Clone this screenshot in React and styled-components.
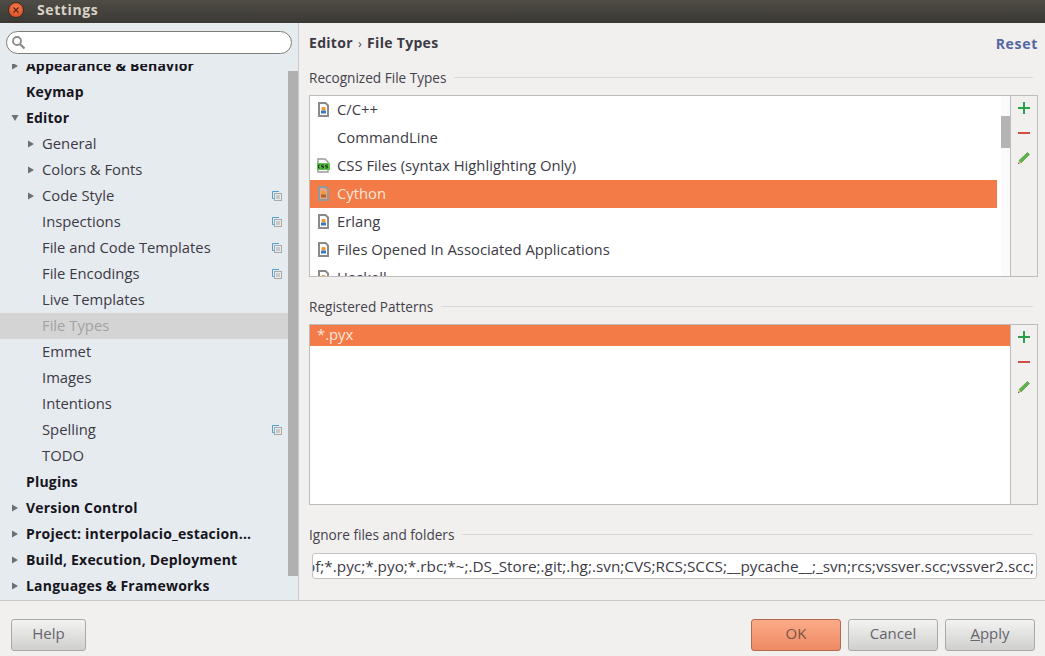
import React from "react";
import styled, { createGlobalStyle } from "styled-components";

const Global = createGlobalStyle`
  html, body { margin: 0; padding: 0; background: #f1f0ee; }
  #root { width: 1045px; height: 656px; overflow: hidden; }
  * { box-sizing: border-box; }
`;
const UI = `"Open Sans", "Noto Sans", sans-serif`;
const BOLD = `"Open Sans", "DejaVu Sans", sans-serif`;

const Window = styled.div`
  width: 1045px; height: 656px; display: flex; flex-direction: column;
  background: #f1f0ee; font-family: ${UI}; color: #3d3a45;
`;
const TitleBar = styled.div`
  height: 23px; flex: none; display: flex; align-items: center; padding-left: 8px; gap: 13px;
  background: linear-gradient(#4f4c46, #3b3934);
`;
const CloseDot = styled.div`
  width: 16px; height: 16px; margin-top: -4px; margin-bottom: -1px; border-radius: 50%;
  background: radial-gradient(circle at 50% 35%, #f47a4d, #d9471f);
  border: 1px solid #3a2a20; display: flex; align-items: center; justify-content: center;
`;
const WinTitle = styled.div`
  font: bold 14px ${BOLD}; color: #d8d3c8; letter-spacing: 0.6px; padding-bottom: 5px;
`;
const Body = styled.div`
  flex: 1; display: flex; min-height: 0; border-bottom: 1px solid #c8c8c8;
`;
const Sidebar = styled.div`
  width: 299px; flex: none; background: #e6ebf0; border-right: 1px solid #c9c9c9;
  display: flex; flex-direction: column; position: relative;
`;
const SearchWrap = styled.div`
  height: 41px; flex: none; padding: 8px 6px 0 6px;
`;
const SearchBox = styled.div`
  height: 23px; border: 1px solid #7f7d78; border-radius: 12px; background: #fff;
  display: flex; align-items: center; padding-left: 4px;
`;
const Tree = styled.div`
  flex: 1; overflow: hidden; min-height: 0;
`;
const TreeInner = styled.div`
  margin-top: -11px;
`;
const Row = styled.div`
  height: 26px; display: flex; align-items: center; position: relative;
  padding-left: ${p => (p.$child ? 42 : 26)}px;
  padding-bottom: ${p => (p.$bold ? 1 : 2)}px;
  width: 288px;
  background: ${p => (p.$sel ? "#d4d4d4" : "transparent")};
  color: ${p => (p.$sel ? "#a2a2a2" : p.$bold ? "#17151c" : "#3d3a45")};
  font: ${p => (p.$bold ? `bold 14px ${BOLD}` : `14.8px ${UI}`)};
  letter-spacing: ${p => (p.$bold ? "0.2px" : "0")};
  white-space: nowrap;
`;
const Arrow = styled.svg`
  position: absolute; left: ${p => (p.$child ? 27 : 11)}px; top: 9px;
`;
const CopyIco = styled.svg`
  position: absolute; left: 272px; top: 8px;
`;
const SideScroll = styled.div`
  position: absolute; left: 288px; top: 48px; width: 10px; height: 505px; background: #b0b0b0;
`;
const Main = styled.div`
  flex: 1; min-width: 0; padding: 0 7px 0 10px; display: flex; flex-direction: column;
`;
const Header = styled.div`
  height: 39px; flex: none; display: flex; align-items: center; justify-content: space-between;
`;
const Crumb = styled.div`
  font: bold 14px ${BOLD}; color: #3d3a45; display: flex; align-items: center; gap: 5px; letter-spacing: 0.3px;
`;
const Sep = styled.span`
  font: 13px ${UI}; color: #55525c;
`;
const Reset = styled.div`
  font: bold 14px ${BOLD}; color: #5467a3; letter-spacing: 0.7px; padding-top: 2px;
`;
const SectionTitle = styled.div`
  height: ${p => p.$h}px; margin-top: ${p => p.$mt || 0}px; flex: none; padding-bottom: 2px;
  display: flex; align-items: center; gap: 8px; font-size: 13.6px; color: #45424d; padding-right: 5px;
  &::after { content: ""; flex: 1; height: 1px; background: #d9d9d7; }
`;
const ListBox = styled.div`
  height: ${p => p.$h}px; flex: none; display: flex; border: 1px solid #bdbdbd; background: #fff;
`;
const ListArea = styled.div`
  flex: 1; min-width: 0; overflow: hidden; position: relative;
`;
const TypeRow = styled.div`
  height: 28px; width: 687px; display: flex; align-items: center; gap: 6px; padding: 0 0 2px 6px;
  font-size: 14.8px; white-space: nowrap;
  background: ${p => (p.$sel ? "#f37b48" : "transparent")};
  color: ${p => (p.$sel ? "#fde6da" : "#3d3a45")};
`;
const IconSlot = styled.div`
  width: 15px; height: 16px; flex: none; display: flex; align-items: center; justify-content: center;
`;
const VScroll = styled.div`
  position: absolute; left: 691px; top: 0; bottom: 0; width: 10px; background: #fafafa;
  &::after { content: ""; position: absolute; left: 0; right: 0; top: 20px; height: 32px; background: #b4b4b4; }
`;
const Tools = styled.div`
  width: 27px; flex: none; border-left: 1px solid #bdbdbd; background: #f1f0ee;
  display: flex; flex-direction: column; align-items: center; padding-top: 5px; gap: 11px;
`;
const PatternRow = styled.div`
  height: 21px; background: #f37b48; color: #fde6da; font-size: 14.8px;
  display: flex; align-items: center; padding: 0 0 3px 7px;
`;
const IgnoreInput = styled.div`
  height: 26px; flex: none; margin: 0 1px 0 3px; border: 1px solid #c4c4c4; border-radius: 3px;
  background: #fff; display: flex; justify-content: flex-end; align-items: center;
  overflow: hidden; padding: 0 2px 1px; font-size: 15.3px; white-space: nowrap; color: #3d3a45;
`;
const Footer = styled.div`
  height: 55px; flex: none; display: flex; align-items: flex-start; padding: 18px 10px 0 11px; gap: 7px;
`;
const Btn = styled.div`
  width: ${p => p.$w}px; height: 32px; border-radius: 3px; display: flex; align-items: center; justify-content: center;
  padding-bottom: 4px;
  font-size: 15px; color: ${p => (p.$primary ? "#7a5344" : "#66646d")};
  border: 1px solid ${p => (p.$primary ? "#b06b50" : "#a9a9a7")};
  background: ${p => (p.$primary ? "linear-gradient(#fbab88, #ee8a63)" : "linear-gradient(#f3f3f2, #cfcfce)")};
  margin-left: ${p => (p.$push ? "auto" : 0)};
  u { text-decoration: underline; }
`;

const ArrowRight = ({ child }) => (
  <Arrow $child={child} width="8" height="8" viewBox="0 0 8 8"><path d="M1 0.5 L7 4 L1 7.5 Z" fill="#6f6f6f" /></Arrow>
);
const ArrowDown = () => (
  <Arrow width="8" height="8" viewBox="0 0 8 8"><path d="M0.5 1 L7.5 1 L4 7 Z" fill="#6f6f6f" /></Arrow>
);
const Copy = () => (
  <CopyIco width="10" height="10" viewBox="0 0 10 10">
    <path d="M7 .5H.5V7.5H2.5" fill="none" stroke="#4f9fd0" />
    <rect x="2.5" y="2.5" width="7" height="7" fill="#e6ebf0" stroke="#a8a8a8" />
    <path d="M4 5H8M4 7H8" stroke="#a8a8a8" />
  </CopyIco>
);
const FileIco = ({ sel }) => (
  <svg width="11" height="15" viewBox="0 0 11 15">
    <path d="M1 1H7.5L10 3.5V14H1Z" fill={sel ? "#f0a07a" : "#fff"} stroke={sel ? "#8f9aa0" : "#8a8a8a"} strokeWidth="2" />
    <rect x="3.5" y="5" width="4" height="3.5" rx="1.2" fill="#ee9a30" />
    <rect x="3" y="8.5" width="5" height="3" fill={sel ? "#b5602f" : "#3b78c4"} />
  </svg>
);
const CssIco = () => (
  <svg width="13" height="15" viewBox="0 0 13 15">
    <path d="M1 1H8L11 4V14H1Z" fill="#fff" stroke="#9a9a9a" strokeWidth="1.4" />
    <rect x="0" y="5" width="13" height="7" fill="#5fc24f" />
    <path d="M3.3 7H1.5V10H3.3M7 7H4.6V8.5H6.6V10H4.4M11 7H8.6V8.5H10.6V10H8.4" fill="none" stroke="#12350f" strokeWidth="0.9" />
  </svg>
);
const Plus = () => (
  <svg width="14" height="14" viewBox="0 0 14 14"><path d="M7 1V13M1 7H13" stroke="#27a24b" strokeWidth="2" /></svg>
);
const Minus = () => (
  <svg width="14" height="14" viewBox="0 0 14 14"><path d="M1 7H13" stroke="#c95043" strokeWidth="2" /></svg>
);
const Pencil = () => (
  <svg width="14" height="14" viewBox="0 0 14 14">
    <path d="M4 12 L12.5 3.5 L10.5 1.5 L2 9.5 Z" fill="#5fb54a" stroke="#3f8f35" strokeWidth="0.6" />
    <path d="M2 9.5 L1 13 L4 12 Z" fill="#e8b37a" />
    <path d="M1 13 L1.5 11.5 L2.5 12.5 Z" fill="#333" />
  </svg>
);
const Search = () => (
  <svg width="15" height="15" viewBox="0 0 15 15">
    <circle cx="6" cy="6" r="4" fill="none" stroke="#8a8a8a" strokeWidth="1.8" />
    <path d="M9 9L13.5 13.5" stroke="#8a8a8a" strokeWidth="2.2" />
  </svg>
);
const Tool3 = () => (<Tools><Plus /><Minus /><Pencil /></Tools>);

const tree = [
  { t: "Appearance & Behavior", b: 1, a: "r" },
  { t: "Keymap", b: 1 },
  { t: "Editor", b: 1, a: "d" },
  { t: "General", c: 1, a: "r" },
  { t: "Colors & Fonts", c: 1, a: "r" },
  { t: "Code Style", c: 1, a: "r", k: 1 },
  { t: "Inspections", c: 1, k: 1 },
  { t: "File and Code Templates", c: 1, k: 1 },
  { t: "File Encodings", c: 1, k: 1 },
  { t: "Live Templates", c: 1 },
  { t: "File Types", c: 1, s: 1 },
  { t: "Emmet", c: 1 },
  { t: "Images", c: 1 },
  { t: "Intentions", c: 1 },
  { t: "Spelling", c: 1, k: 1 },
  { t: "TODO", c: 1 },
  { t: "Plugins", b: 1 },
  { t: "Version Control", b: 1, a: "r" },
  { t: "Project: interpolacio_estacion...", b: 1, a: "r" },
  { t: "Build, Execution, Deployment", b: 1, a: "r" },
  { t: "Languages & Frameworks", b: 1, a: "r" },
];

const types = [
  { t: "C/C++", i: "f" },
  { t: "CommandLine" },
  { t: "CSS Files (syntax Highlighting Only)", i: "c" },
  { t: "Cython", i: "f", s: 1 },
  { t: "Erlang", i: "f" },
  { t: "Files Opened In Associated Applications", i: "f" },
  { t: "Haskell", i: "f" },
];

export default function App() {
  return (
    <Window>
      <Global />
      <TitleBar>
        <CloseDot>
          <svg width="8" height="8" viewBox="0 0 8 8"><path d="M1.5 1.5L6.5 6.5M6.5 1.5L1.5 6.5" stroke="#5a2412" strokeWidth="1.3" /></svg>
        </CloseDot>
        <WinTitle>Settings</WinTitle>
      </TitleBar>
      <Body>
        <Sidebar>
          <SearchWrap><SearchBox><Search /></SearchBox></SearchWrap>
          <Tree>
            <TreeInner>
              {tree.map(r => (
                <Row key={r.t} $child={r.c} $bold={r.b} $sel={r.s}>
                  {r.a === "r" && <ArrowRight child={r.c} />}
                  {r.a === "d" && <ArrowDown />}
                  {r.t}
                  {r.k && <Copy />}
                </Row>
              ))}
            </TreeInner>
          </Tree>
          <SideScroll />
        </Sidebar>
        <Main>
          <Header>
            <Crumb>Editor <Sep>›</Sep> File Types</Crumb>
            <Reset>Reset</Reset>
          </Header>
          <SectionTitle $h={33}>Recognized File Types</SectionTitle>
          <ListBox $h={182}>
            <ListArea>
              {types.map(r => (
                <TypeRow key={r.t} $sel={r.s}>
                  <IconSlot>
                    {r.i === "f" && <FileIco sel={r.s} />}
                    {r.i === "c" && <CssIco />}
                  </IconSlot>
                  {r.t}
                </TypeRow>
              ))}
              <VScroll />
            </ListArea>
            <Tool3 />
          </ListBox>
          <SectionTitle $h={34} $mt={13}>Registered Patterns</SectionTitle>
          <ListBox $h={181}>
            <ListArea><PatternRow>*.pyx</PatternRow></ListArea>
            <Tool3 />
          </ListBox>
          <SectionTitle $h={36} $mt={12}>Ignore files and folders</SectionTitle>
          <IgnoreInput>*.hprof;*.pyc;*.pyo;*.rbc;*~;.DS_Store;.git;.hg;.svn;CVS;RCS;SCCS;__pycache__;_svn;rcs;vssver.scc;vssver2.scc;</IgnoreInput>
        </Main>
      </Body>
      <Footer>
        <Btn $w={75}>Help</Btn>
        <Btn $w={90} $primary $push>OK</Btn>
        <Btn $w={90}>Cancel</Btn>
        <Btn $w={90}><span><u>A</u>pply</span></Btn>
      </Footer>
    </Window>
  );
}
